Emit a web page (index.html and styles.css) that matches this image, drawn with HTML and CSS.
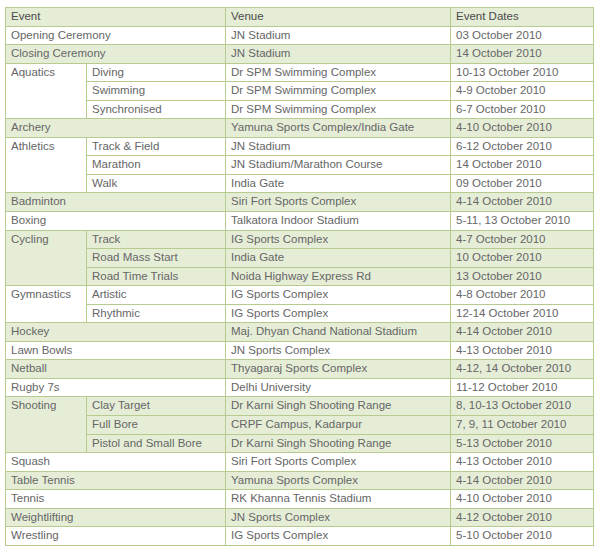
FILE: index.html
```html
<!DOCTYPE html>
<html>
<head>
<meta charset="utf-8">
<link rel="stylesheet" href="styles.css">
</head>
<body>
<table class="events">
<colgroup><col class="c1"><col class="c2"><col class="c3"><col class="c4"></colgroup>
<tr class="head"><th colspan="2">Event</th><th>Venue</th><th>Event Dates</th></tr>
<tr><td colspan="2">Opening Ceremony</td><td>JN Stadium</td><td>03 October 2010</td></tr>
<tr class="alt"><td colspan="2">Closing Ceremony</td><td>JN Stadium</td><td>14 October 2010</td></tr>
<tr><td rowspan="3">Aquatics</td><td>Diving</td><td>Dr SPM Swimming Complex</td><td>10-13 October 2010</td></tr>
<tr><td>Swimming</td><td>Dr SPM Swimming Complex</td><td>4-9 October 2010</td></tr>
<tr><td>Synchronised</td><td>Dr SPM Swimming Complex</td><td>6-7 October 2010</td></tr>
<tr class="alt"><td colspan="2">Archery</td><td>Yamuna Sports Complex/India Gate</td><td>4-10 October 2010</td></tr>
<tr><td rowspan="3">Athletics</td><td>Track &amp; Field</td><td>JN Stadium</td><td>6-12 October 2010</td></tr>
<tr><td>Marathon</td><td>JN Stadium/Marathon Course</td><td>14 October 2010</td></tr>
<tr><td>Walk</td><td>India Gate</td><td>09 October 2010</td></tr>
<tr class="alt"><td colspan="2">Badminton</td><td>Siri Fort Sports Complex</td><td>4-14 October 2010</td></tr>
<tr><td colspan="2">Boxing</td><td>Talkatora Indoor Stadium</td><td>5-11, 13 October 2010</td></tr>
<tr class="alt"><td rowspan="3">Cycling</td><td>Track</td><td>IG Sports Complex</td><td>4-7 October 2010</td></tr>
<tr class="alt"><td>Road Mass Start</td><td>India Gate</td><td>10 October 2010</td></tr>
<tr class="alt"><td>Road Time Trials</td><td>Noida Highway Express Rd</td><td>13 October 2010</td></tr>
<tr><td rowspan="2">Gymnastics</td><td>Artistic</td><td>IG Sports Complex</td><td>4-8 October 2010</td></tr>
<tr><td>Rhythmic</td><td>IG Sports Complex</td><td>12-14 October 2010</td></tr>
<tr class="alt"><td colspan="2">Hockey</td><td>Maj. Dhyan Chand National Stadium</td><td>4-14 October 2010</td></tr>
<tr><td colspan="2">Lawn Bowls</td><td>JN Sports Complex</td><td>4-13 October 2010</td></tr>
<tr class="alt"><td colspan="2">Netball</td><td>Thyagaraj Sports Complex</td><td>4-12, 14 October 2010</td></tr>
<tr><td colspan="2">Rugby 7s</td><td>Delhi University</td><td>11-12 October 2010</td></tr>
<tr class="alt"><td rowspan="3">Shooting</td><td>Clay Target</td><td>Dr Karni Singh Shooting Range</td><td>8, 10-13 October 2010</td></tr>
<tr class="alt"><td>Full Bore</td><td>CRPF Campus, Kadarpur</td><td>7, 9, 11 October 2010</td></tr>
<tr class="alt"><td>Pistol and Small Bore</td><td>Dr Karni Singh Shooting Range</td><td>5-13 October 2010</td></tr>
<tr><td colspan="2">Squash</td><td>Siri Fort Sports Complex</td><td>4-13 October 2010</td></tr>
<tr class="alt"><td colspan="2">Table Tennis</td><td>Yamuna Sports Complex</td><td>4-14 October 2010</td></tr>
<tr><td colspan="2">Tennis</td><td>RK Khanna Tennis Stadium</td><td>4-10 October 2010</td></tr>
<tr class="alt"><td colspan="2">Weightlifting</td><td>JN Sports Complex</td><td>4-12 October 2010</td></tr>
<tr><td colspan="2">Wrestling</td><td>IG Sports Complex</td><td>5-10 October 2010</td></tr>
</table>
</body>
</html>
```
FILE: styles.css
```css
html, body {
  margin: 0;
  padding: 0;
  background: #ffffff;
}
body {
  padding: 7px 0 0 5px;
}
.events {
  border-collapse: collapse;
  table-layout: fixed;
  width: 588px;
  font-family: "Liberation Sans", Arial, sans-serif;
  font-size: 11.5px;
  color: #666666;
}
.c1 { width: 81px; }
.c2 { width: 139px; }
.c3 { width: 225px; }
.c4 { width: 143px; }
.events th,
.events td {
  border: 1px solid #b7cb8e;
  padding: 0 5px;
  height: 17.55px;
  line-height: 17px;
  text-align: left;
  vertical-align: top;
  white-space: nowrap;
}
.events th {
  font-weight: normal;
  color: #4a4a4a;
}
.head th,
.alt td {
  background: #e5edd7;
}
```
